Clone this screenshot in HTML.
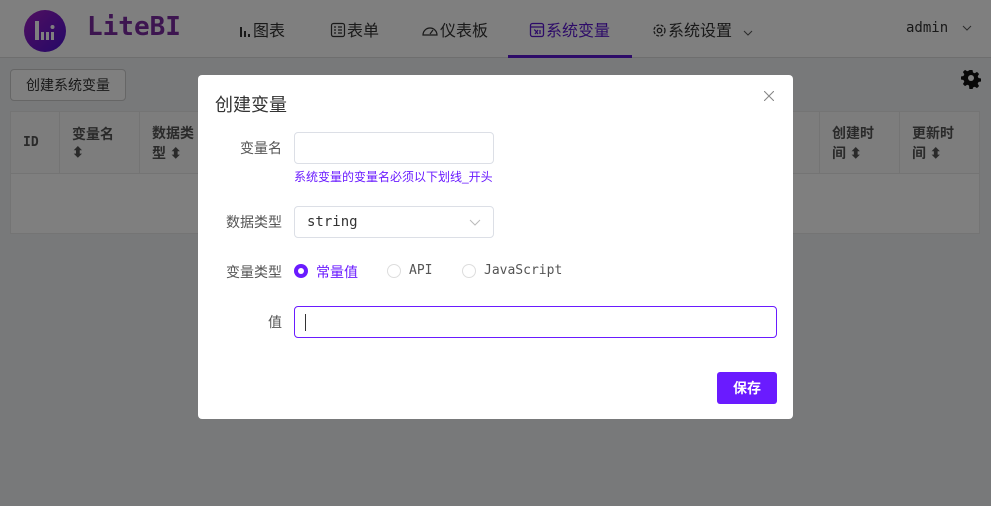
<!DOCTYPE html>
<html><head><meta charset="utf-8"><style>
*{box-sizing:border-box;margin:0;padding:0}
body{width:991px;height:506px;overflow:hidden;position:relative;background:#f0f2f5;font-family:"Liberation Sans","Noto Sans CJK SC",sans-serif;font-size:14px;color:#333}
.hdr{position:absolute;left:0;top:0;width:991px;height:58px;background:#fff;border-bottom:1px solid #ddd}
.logo{position:absolute;left:24px;top:10px;width:42px;height:42px;border-radius:50%;background:linear-gradient(135deg,#a020c0,#4a10d0)}
.brand{position:absolute;left:87px;top:12px;font:bold 26px "DejaVu Sans Mono","Liberation Mono",monospace;color:#7a2aa0;letter-spacing:0px}
.nav{position:absolute;top:17px;font-size:16px;color:#333}
.nav svg{vertical-align:-2px;margin-right:1px}
.abs{position:absolute}
.ov{position:absolute;left:0;top:0;width:991px;height:506px;background:rgba(0,0,0,.5)}
.modal{position:absolute;left:198px;top:75px;width:595px;height:344px;background:#fff;border-radius:4px}
.lbl{position:absolute;width:84px;text-align:right;color:#555;font-size:14px}
.inp{position:absolute;left:96px;width:200px;height:32px;border:1px solid #dcdfe6;border-radius:4px}
.mono{font-family:"DejaVu Sans Mono","Liberation Mono","Noto Sans CJK SC",monospace;font-size:13px}
th,td{border:1px solid #e8e8e8}
</style></head><body>
<div class="hdr">
 <div class="logo"><svg width="42" height="42"><g fill="#fff"><rect x="11" y="11" width="4" height="19"/><rect x="17" y="22" width="3" height="8"/><rect x="22" y="22" width="3" height="8"/><rect x="27" y="22" width="3" height="8"/><circle cx="28.5" cy="17" r="2"/></g></svg></div>
 <div class="brand">LiteBI</div>
 <div class="nav" style="left:238px"><svg width="14" height="14"><g fill="#333"><rect x="2" y="3" width="2" height="10"/><rect x="6" y="7" width="2" height="6"/><rect x="10" y="10" width="2" height="3"/></g></svg>图表</div>
 <div class="nav" style="left:330px"><svg width="16" height="16" fill="none" stroke="#333" stroke-width="1.2"><rect x="1.5" y="1.5" width="13" height="13" rx="2"/><path d="M4 5h2M8 5h4M4 8h2M8 8h4M4 11h2M8 11h4"/></svg>表单</div>
 <div class="nav" style="left:421px"><svg width="18" height="16" fill="none" stroke="#333" stroke-width="1.2"><path d="M2 13a7 7 0 1 1 14 0z"/><path d="M9 12l3-4"/></svg>仪表板</div>
 <div class="nav" style="left:529px;color:#5a16d0"><svg width="16" height="16" fill="none" stroke="#5a16d0" stroke-width="1.3"><rect x="1.5" y="1.5" width="13" height="13" rx="2"/><path d="M1.5 5h13M5 8l1 0M6 8l3 4M9 8l-3 4M11 8v4"/></svg>系统变量</div>
 <div class="abs" style="left:508px;top:55px;width:124px;height:3px;background:#5a16d0"></div>
 <div class="nav" style="left:652px"><svg width="15" height="15" fill="none" stroke="#333" stroke-width="1.3"><circle cx="7.5" cy="7.5" r="5.5" stroke-dasharray="3 1.5"/><circle cx="7.5" cy="7.5" r="2.2"/></svg>系统设置 <svg width="12" height="10" style="margin-left:6px" fill="none" stroke="#555"><path d="M2 3l4 4 4-4"/></svg></div>
 <div class="nav mono" style="left:906px;top:20px;font-size:14px">admin <svg width="12" height="10" style="margin-left:4px" fill="none" stroke="#555"><path d="M2 2l4 4 4-4"/></svg></div>
</div>
<div class="abs" style="left:10px;top:69px;width:116px;height:32px;border:1px solid #ccc;border-radius:4px;background:#fff;text-align:center;line-height:30px;color:#333">创建系统变量</div>
<svg class="abs" style="left:961px;top:69px" width="20" height="20" viewBox="0 0 20 20"><path fill="#111" d="M8.5 1h3l.5 2.5 1.8.8 2.2-1.4 2.1 2.1-1.4 2.2.8 1.8 2.5.5v3l-2.5.5-.8 1.8 1.4 2.2-2.1 2.1-2.2-1.4-1.8.8-.5 2.5h-3L8 16.5l-1.8-.8L4 17.1 1.9 15l1.4-2.2-.8-1.8L0 10.5v-3L2.5 7l.8-1.8L1.9 3 4 .9l2.2 1.4L8 1.5z"/><circle cx="10" cy="9" r="3" fill="#fff"/></svg>
<table class="abs" style="left:10px;top:111px;width:970px;border-collapse:collapse;background:#fff;font-weight:bold;color:#555">
<tr style="height:62px;background:#fafafa"><td style="width:49px;padding-left:12px" class="mono">ID</td><td style="width:80px;padding-left:12px">变量名<br>⬍</td><td style="width:60px;padding-left:12px">数据类<br>型 ⬍</td><td></td><td style="width:80px;padding-left:12px">创建时<br>间 ⬍</td><td style="width:80px;padding-left:12px">更新时<br>间 ⬍</td></tr>
<tr style="height:60px"><td colspan="6"></td></tr></table>
<div class="ov"></div>
<div class="modal">
 <div class="abs" style="left:17px;top:16px;font-size:18px;color:#333">创建变量</div>
 <svg class="abs" style="left:566px;top:16px" width="10" height="10" stroke="#888" stroke-width="1.1"><path d="M0 0l10 10M10 0L0 10"/></svg>
 <div class="lbl" style="top:63px">变量名</div>
 <div class="inp" style="top:57px"></div>
 <div class="abs" style="left:96px;top:93px;font-size:12px;color:#6a1bff">系统变量的变量名必须以下划线_开头</div>
 <div class="lbl" style="top:137px">数据类型</div>
 <div class="inp mono" style="top:131px;padding:7px 12px;color:#333;font-size:14px">string<svg style="position:absolute;right:12px;top:12px" width="12" height="8" fill="none" stroke="#bbb"><path d="M1 1l5 5 5-5"/></svg></div>
 <div class="lbl" style="top:187px">变量类型</div>
 <div class="abs" style="left:96px;top:189px;width:14px;height:14px;border-radius:50%;background:#6a1bff"><div style="margin:4px;width:6px;height:6px;border-radius:50%;background:#fff"></div></div>
 <div class="abs" style="left:118px;top:187px;color:#6a1bff">常量值</div>
 <div class="abs" style="left:189px;top:189px;width:14px;height:14px;border-radius:50%;border:1px solid #ddd"></div>
 <div class="abs mono" style="left:211px;top:188px;color:#555">API</div>
 <div class="abs" style="left:264px;top:189px;width:14px;height:14px;border-radius:50%;border:1px solid #ddd"></div>
 <div class="abs mono" style="left:286px;top:188px;color:#555">JavaScript</div>
 <div class="lbl" style="top:237px">值</div>
 <div class="inp" style="top:231px;width:483px;border-color:#6a1bff"><div style="position:absolute;left:10px;top:7px;width:1px;height:17px;background:#333"></div></div>
 <div class="abs" style="left:519px;top:297px;width:60px;height:32px;background:#6a1bff;border-radius:3px;color:#fff;font-weight:bold;text-align:center;line-height:32px">保存</div>
</div>
</body></html>
